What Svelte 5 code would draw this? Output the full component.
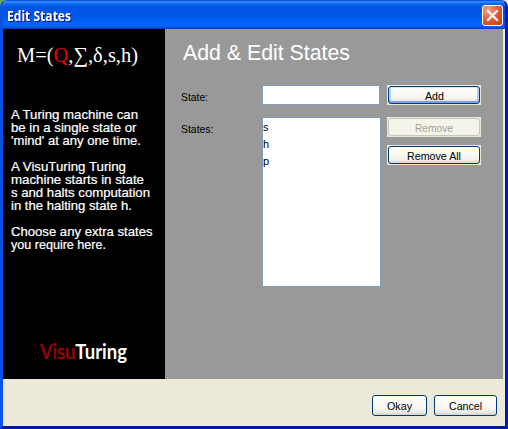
<script>
  const states = ['s', 'h', 'p'];
  const help = [
    [['A Turing machine can', 127], ['be in a single state or', 125.5], ["'mind' at any one time.", 130]],
    [['A VisuTuring Turing', 115], ['machine starts in state', 133], ['s and halts computation', 139], ['in the halting state h.', 121]],
    [['Choose any extra states', 141.5], ['you require here.', 95]]
  ];
</script>

{#snippet line(text, width, height, baseline)}
  <svg class="line" width={width + 4} {height}><text x="0" y={baseline} textLength={width} lengthAdjust="spacingAndGlyphs">{text}</text></svg>
{/snippet}

<div class="window">
  <header>
    <span class="caption">{@render line('Edit States', 64, 18, 13)}</span>
    <button class="close" aria-label="Close">
      <svg width="21" height="21" viewBox="0 0 21 21"><path d="M6 6 15 15M15 6 6 15" stroke="#fff" stroke-width="2.1" stroke-linecap="square" /></svg>
    </button>
  </header>
  <div class="body">
    <aside>
      <svg class="formula" width="130" height="34"><text x="0" y="24" textLength="121" lengthAdjust="spacingAndGlyphs">M=(<tspan fill="#f00000">Q</tspan>,∑,δ,s,h)</text></svg>
      <div class="help">
        {#each help as paragraph}
          <div class="para">
            {#each paragraph as [text, width]}
              {@render line(text, width, 13, 10)}
            {/each}
          </div>
        {/each}
      </div>
      <svg class="logo" width="95" height="28"><text x="0" y="18" textLength="87" lengthAdjust="spacingAndGlyphs"><tspan class="visu">Visu</tspan><tspan class="bold">Turing</tspan></text></svg>
    </aside>
    <main>
      <h1>{@render line('Add & Edit States', 167, 28, 20)}</h1>
      <div class="form">
        <label for="state">{@render line('State:', 27, 14, 10)}</label>
        <input id="state" />
        <div class="cell"><button class="btn default">{@render line('Add', 19, 14, 11)}</button></div>
      </div>
      <div class="form second">
        <label for="list">{@render line('States:', 32.5, 14, 10)}</label>
        <div class="list" id="list">
          {#each states as s}<div class="item">{s}</div>{/each}
        </div>
        <div class="stack">
          <div class="cell"><button class="btn disabled" disabled>{@render line('Remove', 38, 14, 11)}</button></div>
          <div class="cell"><button class="btn">{@render line('Remove All', 54, 14, 11)}</button></div>
        </div>
      </div>
    </main>
  </div>
  <footer>
    <button class="btn okay">{@render line('Okay', 25, 14, 11)}</button>
    <button class="btn cancel">{@render line('Cancel', 33, 14, 11)}</button>
  </footer>
</div>

<style>
  :global(body) { margin: 0; background: linear-gradient(90deg, #5cae4c 50%, #ece9d8 50%); overflow: hidden; }
  .window {
    width: 508px; height: 429px; box-sizing: border-box; display: flex; flex-direction: column;
    border-radius: 7px 7px 0 0; background: #ece9d8; overflow: hidden;
    border: solid; border-width: 0 3px 3px; border-color: #0a49e0 #0019b8 #0019a4 #0a52e6;
    font-family: "Liberation Sans", Arial, sans-serif; font-size: 11px;
  }
  svg { display: block; overflow: visible; }
  .line text { fill: currentColor; }
  header {
    height: 29px; margin: 0 -3px; padding: 0 5px 0 7px; flex: none; display: flex; justify-content: space-between;
    background: linear-gradient(#0046c8 0, #2a88fb 1px, #2c8afc 2px, #0863ef 4px, #0054e3 7px, #0055e5 14px, #0060f6 20px, #0066fe 25px, #0058e8 27px, #0044d0 29px);
    box-shadow: inset 2px 0 1px #0a48d0, inset -3px 0 2px #0026ae;
    color: #fff;
  }
  .caption { padding-top: 8px; font: bold 13.5px "Open Sans", "Noto Sans", sans-serif; filter: drop-shadow(1px 1px 0 #0f1089); }
  .close {
    width: 21px; height: 21px; margin-top: 5px; padding: 0; border: 1px solid #fff; border-radius: 3px;
    background: radial-gradient(circle at 25% 20%, #f0a48b, #e35a34 50%, #c43a12);
  }
  .close svg { margin: -1px; }
  .body { flex: none; height: 350px; display: flex; }
  aside { width: 162px; background: #000; color: #fff; display: flex; flex-direction: column; }
  .formula { margin: 9px 0 0 14px; font: 21px "Liberation Serif", serif; fill: #fff; }
  .help { margin: 37px 0 0 8px; font-size: 12.4px; }
  .help .para { margin-bottom: 13px; }
  .help :global(text) { stroke: #fff; stroke-width: 0.2px; }
  .logo { margin: 76px 0 0 37px; font: 21px Lato, sans-serif; fill: #fff; }
  .visu { fill: #a00000; stroke: #a00000; stroke-width: 0.5px; }
  .bold { font-weight: 700; }
  main { width: 338px; background: #999; }
  h1 { margin: 0; padding: 11px 0 0 18px; height: 46px; font-size: 22px; font-weight: 400; color: #fff; }
  .form { display: flex; align-items: flex-start; padding-left: 16px; height: 33px; margin-top: -1px; }
  .second { margin-top: -1px; }
  label { width: 81px; padding-top: 6px; }
  input { box-sizing: border-box; width: 118px; height: 20px; border: 1px solid #7f9db9; border-radius: 0; padding: 0 2px; background: #fff; outline: none; }
  .list { box-sizing: border-box; width: 119px; height: 170px; border: 1px solid #7f9db9; background: #fff; }
  .item { height: 17px; line-height: 19px; }
  .cell { width: 94px; height: 20px; background: #ece9d8; padding: 1px; box-sizing: border-box; margin-left: 7px; }
  .second .cell { margin-left: 6px; }
  .stack { display: flex; flex-direction: column; gap: 8px; }
  .btn {
    box-sizing: border-box; width: 100%; height: 100%; padding: 1px 0 0; border: 1px solid #003c74; border-radius: 3px;
    display: flex; align-items: center; justify-content: center; color: #000; font: 11px "Liberation Sans", Arial, sans-serif;
    background: linear-gradient(#fff, #f5f4ef 70%, #e9e6df 88%, #d6d0c5);
  }
  .btn :global(svg) { margin-right: -4px; }
  .default { box-shadow: inset 0 1px #cee7ff, inset 0 -2px #7d9ee8, inset 2px 0 #b3cdf6, inset -2px 0 #b3cdf6; }
  .disabled { background: #f5f4ea; border-color: #c9c7ba; color: #a1a192; }
  footer { display: flex; justify-content: flex-end; gap: 7px; padding: 16px 8px 0 0; }
  footer .btn { height: 21px; }
  .okay { width: 55px; }
  .cancel { width: 63px; }
</style>
